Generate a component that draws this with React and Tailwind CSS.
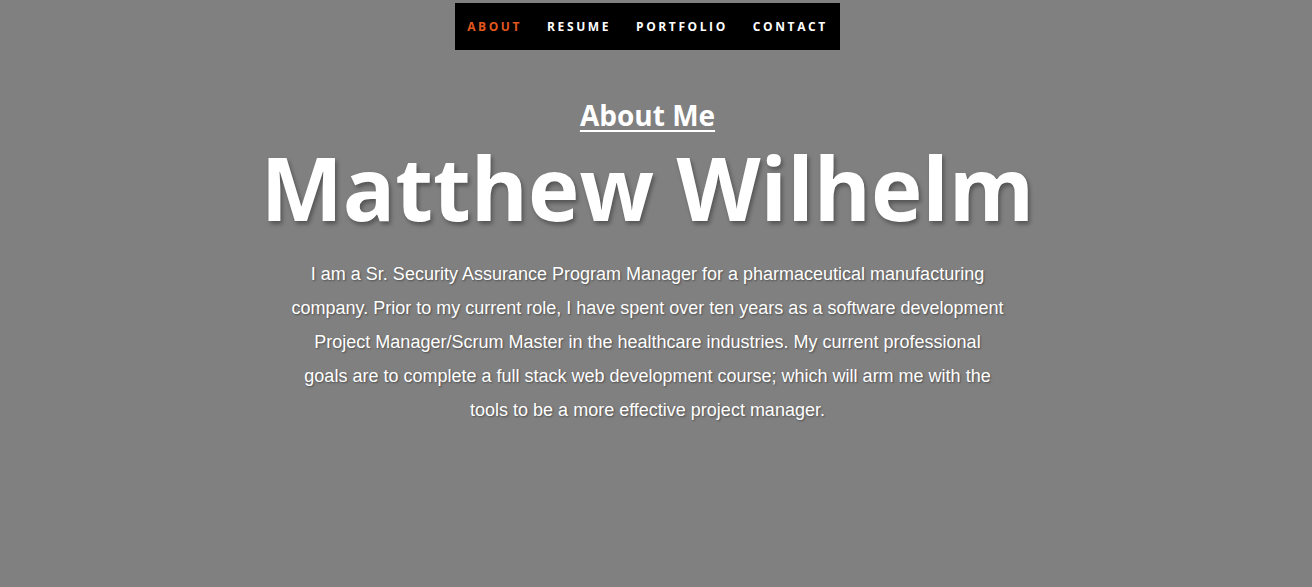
export default function App() {
  const links = ['About', 'Resume', 'Portfolio', 'Contact']

  return (
    <div className="min-h-[587px] bg-[#808080] pr-[17px] font-['Open_Sans',sans-serif]">
      {/* Nav */}
      <div className="flex justify-center pt-[3px]">
        <nav className="flex h-[47px] w-[385px] items-center justify-center gap-[25px] bg-black">
          {links.map((l, i) => (
            <a
              key={l}
              className={`text-[12px] font-bold uppercase tracking-[2.6px] ${i === 0 ? 'text-[#e2571e]' : 'text-white'}`}
            >
              {l}
            </a>
          ))}
        </nav>
      </div>

      {/* Hero */}
      <div className="flex flex-col items-center pt-[47px] text-center text-white">
        <h2 className="text-[28px] font-bold leading-[36px] underline decoration-[2px] underline-offset-[4px]">
          About Me
        </h2>
        <h1 className="-mt-[5px] text-[87px] font-bold leading-[118px] [text-shadow:2px_3px_4px_rgba(0,0,0,0.35)]">
          Matthew Wilhelm
        </h1>
        <p className="mt-[11px] w-[714px] font-['Liberation_Sans',Arial,sans-serif] text-[18px] leading-[34px] [text-shadow:1px_1px_2px_rgba(0,0,0,0.4)]">
          I am a Sr. Security Assurance Program Manager for a pharmaceutical manufacturing company. Prior to my current role, I have spent over ten years as a software development Project Manager/Scrum Master in the healthcare industries. My current professional goals are to complete a full stack web development course; which will arm me with the tools to be a more effective project manager.
        </p>
      </div>
    </div>
  )
}
